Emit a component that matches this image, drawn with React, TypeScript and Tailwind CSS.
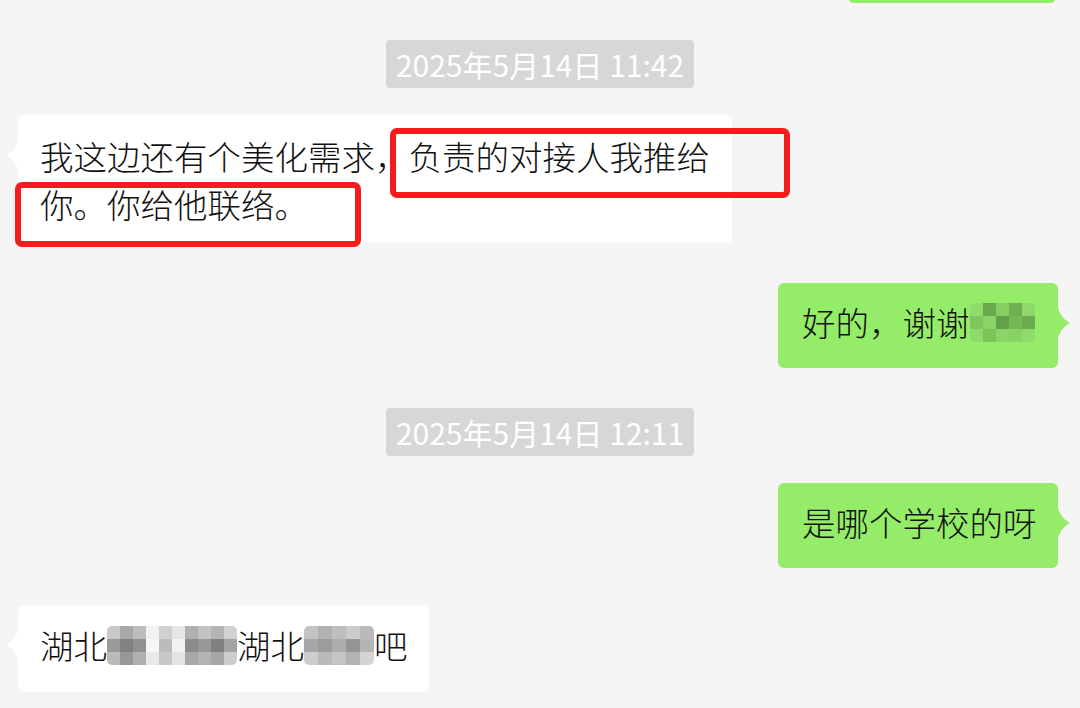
import React from "react";

const greenCells = [
  "bg-[#8fdc6a]", "bg-[#6aa84e]", "bg-[#86cf63]", "bg-[#6fae52]", "bg-[#8fd96a]",
  "bg-[#7fc75c]", "bg-[#8ad467]", "bg-[#64a04a]", "bg-[#74b955]", "bg-[#6aac4f]",
  "bg-[#8edb69]", "bg-[#7cc45a]", "bg-[#8ad567]", "bg-[#86d264]", "bg-[#90dc6b]",
];

const grayCellsA = [
  "bg-[#c9c9c9]", "bg-[#a8a8a8]", "bg-[#bdbdbd]", "bg-[#f0f0f0]", "bg-[#d0d0d0]", "bg-[#e6e6e6]", "bg-[#b0b0b0]", "bg-[#c2c2c2]", "bg-[#b4b4b4]", "bg-[#d2d2d2]",
  "bg-[#999999]", "bg-[#828282]", "bg-[#909090]", "bg-[#f7f7f7]", "bg-[#bcbcbc]", "bg-[#f2f2f2]", "bg-[#8c8c8c]", "bg-[#989898]", "bg-[#7f7f7f]", "bg-[#a3a3a3]",
  "bg-[#bababa]", "bg-[#979797]", "bg-[#b0b0b0]", "bg-[#e9e9e9]", "bg-[#c8c8c8]", "bg-[#e4e4e4]", "bg-[#a8a8a8]", "bg-[#b3b3b3]", "bg-[#a6a6a6]", "bg-[#cdcdcd]",
];

const grayCellsB = [
  "bg-[#c4c4c4]", "bg-[#b2b2b2]", "bg-[#bebebe]", "bg-[#cbcbcb]", "bg-[#bababa]",
  "bg-[#a6a6a6]", "bg-[#9c9c9c]", "bg-[#adadad]", "bg-[#959595]", "bg-[#b5b5b5]",
  "bg-[#cdcdcd]", "bg-[#bababa]", "bg-[#c4c4c4]", "bg-[#b3b3b3]", "bg-[#d4d4d4]",
];

function Mosaic({ cells, width, cell }: { cells: string[]; width: string; cell: string }) {
  return (
    <span className={`inline-flex flex-wrap ${width} blur-[0.6px] rounded-[5px] overflow-hidden`}>
      {cells.map((c, i) => (
        <span key={i} className={`${cell} ${c}`} />
      ))}
    </span>
  );
}

function RightTail() {
  return (
    <svg className="absolute -right-[13px] top-[21px]" width="14" height="38" viewBox="0 0 14 38">
      <path d="M0 0 C2 10 6 15 13 19 C6 23 2 28 0 38 Z" fill="#95ec69" />
    </svg>
  );
}

function LeftTail() {
  return (
    <svg className="absolute -left-[11px] top-[22px]" width="12" height="36" viewBox="0 0 12 36">
      <path d="M12 0 C10 9 6 14 0 18 C6 22 10 27 12 36 Z" fill="#ffffff" />
    </svg>
  );
}

function Stamp({ text }: { text: string }) {
  return (
    <div className="self-center h-[48px] px-[10px] rounded-[4px] bg-[#d7d7d7] text-white text-[30px] leading-[48px] font-normal">
      {text}
    </div>
  );
}

export default function App() {
  return (
    <div className="w-[1080px] h-[708px] overflow-hidden bg-[#f5f5f5] flex flex-col font-['Noto_Sans_CJK_SC','Noto_Sans',sans-serif] font-light text-[33.5px] leading-[48px] text-[#111111]">
      {/* previous message, scrolled off */}
      <div className="self-end mr-[24px] -mt-[37px] w-[208px] h-[40px] rounded-[6px] bg-[#95ec69] shrink-0" />

      <div className="mt-[37px] flex flex-col">
        <Stamp text="2025年5月14日 11:42" />
      </div>

      <div className="self-start ml-[18px] mt-[27px] w-[714px] relative bg-white rounded-[6px] pl-[22px] pr-[18px] pt-[17px] pb-[15px]">
        <LeftTail />
        我这边还有个美化需求，负责的对接人我推给你。你给他联络。
        <div className="absolute left-[372px] top-[13px] w-[400px] h-[70px] border-[6px] border-[#f41c1c] rounded-[7px]" />
        <div className="absolute -left-[3px] top-[67px] w-[346px] h-[65px] border-[6px] border-[#f41c1c] rounded-[7px]" />
      </div>

      <div className="self-end mr-[22px] mt-[40px] w-[280px] relative bg-[#95ec69] rounded-[6px] pl-[24px] pt-[15px] pb-[22px] flex items-center">
        <RightTail />
        <span>好的，谢谢</span>
        <Mosaic cells={greenCells} width="w-[65px]" cell="w-[13px] h-[13px]" />
      </div>

      <div className="mt-[40px] flex flex-col">
        <Stamp text="2025年5月14日 12:11" />
      </div>

      <div className="self-end mr-[22px] mt-[27px] w-[280px] relative bg-[#95ec69] rounded-[6px] pl-[24px] pt-[15px] pb-[22px]">
        <RightTail />
        是哪个学校的呀
      </div>

      <div className="self-start ml-[18px] mt-[37px] relative bg-white rounded-[6px] pl-[22px] pr-[21px] pt-[16px] pb-[23px] flex items-center">
        <LeftTail />
        <span>湖北</span>
        <Mosaic cells={grayCellsA} width="w-[130px]" cell="w-[13px] h-[13px]" />
        <span>湖北</span>
        <Mosaic cells={grayCellsB} width="w-[70px]" cell="w-[14px] h-[13px]" />
        <span>吧</span>
      </div>
    </div>
  );
}
